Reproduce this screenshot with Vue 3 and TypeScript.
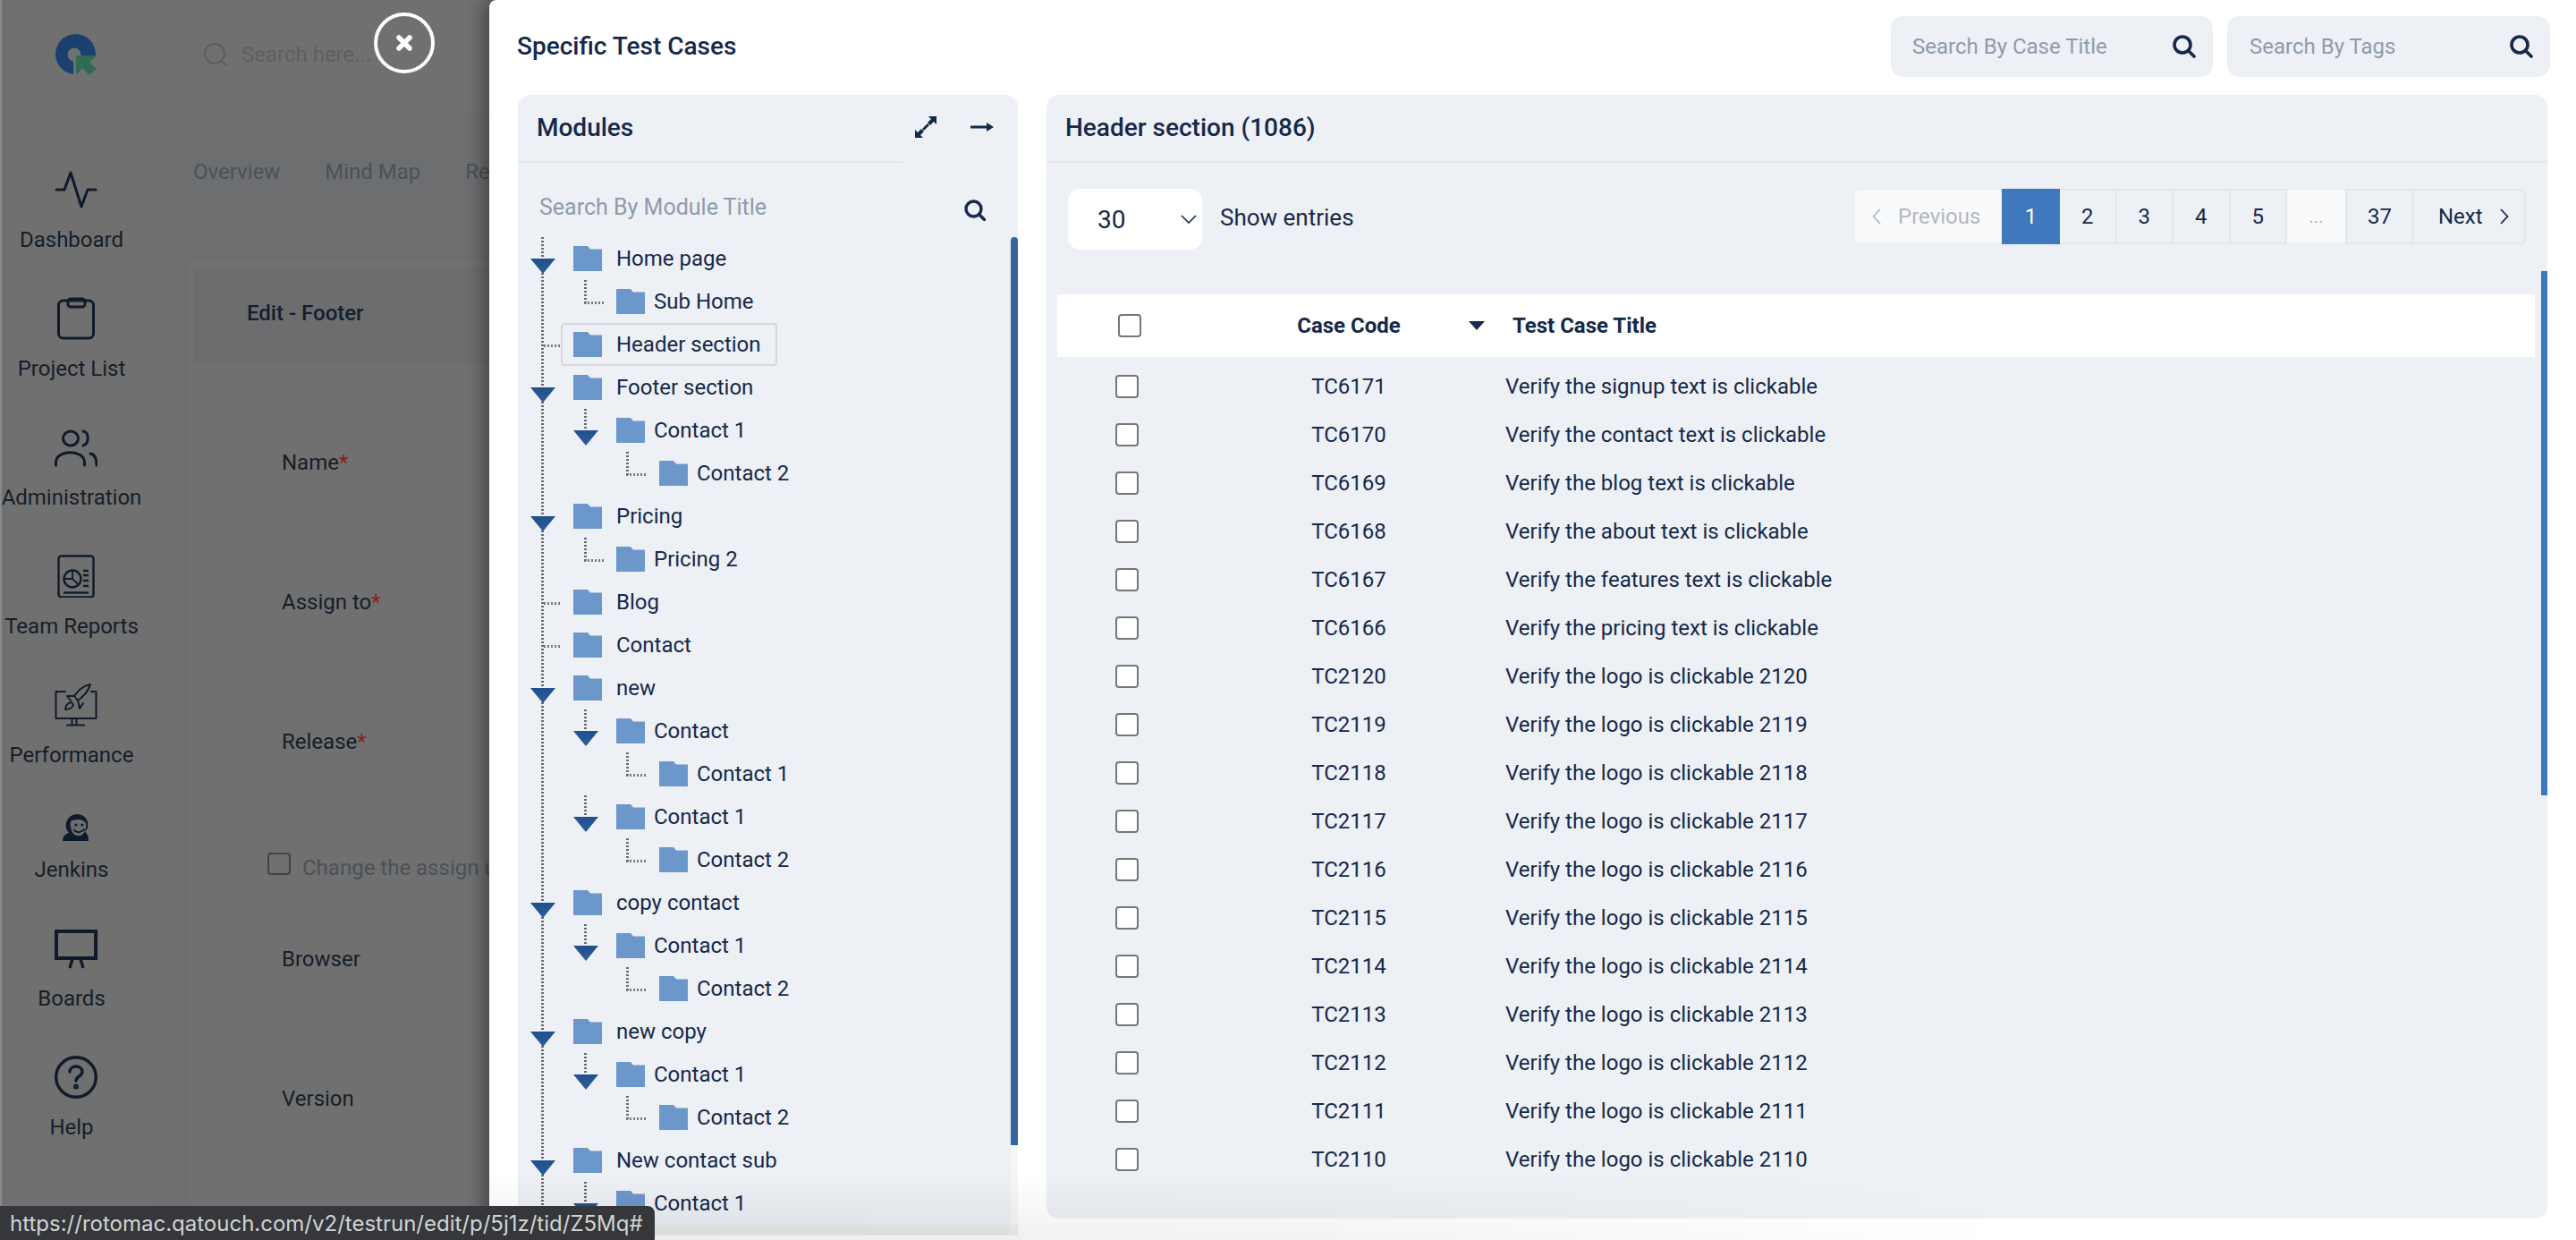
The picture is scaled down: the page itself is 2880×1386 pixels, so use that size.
<template>
  <div class="screen">
    <!-- dimmed app behind the drawer -->
    <div class="app">
      <aside class="sidebar">
        <div class="logo-wrap">
          <svg class="logo" viewBox="60 36 50 50" width="50" height="50">
            <circle cx="84.5" cy="60.5" r="22.5" fill="#1b3f6e" />
            <rect x="82" y="62" width="30" height="26" fill="#707070" />
            <circle cx="83" cy="61" r="7.5" fill="#707070" />
            <polygon points="85,62 108,62 100,70 108,77 100,84 92,76 85,84" fill="#2e6b52" />
          </svg>
        </div>
        <nav class="nav">
          <div class="nav-item">
            <div class="nav-icon">
              <svg viewBox="61 188 48 48" width="48" height="48" fill="none" stroke="#0f1b2b" stroke-width="3" stroke-linecap="round" stroke-linejoin="round">
                <polyline points="63,212 72,212 79,193 91,231 98,212 107,212" />
              </svg>
            </div>
            <span class="nav-label">Dashboard</span>
          </div>
          <div class="nav-item">
            <div class="nav-icon">
              <svg viewBox="61 332 48 48" width="48" height="48" fill="none" stroke="#0f1b2b" stroke-width="3">
                <rect x="65.5" y="336" width="39" height="42" rx="5" />
                <rect x="76" y="334" width="19" height="9" rx="3" />
              </svg>
            </div>
            <span class="nav-label">Project List</span>
          </div>
          <div class="nav-item">
            <div class="nav-icon">
              <svg viewBox="61 476 48 48" width="48" height="48" fill="none" stroke="#0f1b2b" stroke-width="3" stroke-linecap="round">
                <ellipse cx="79" cy="490" rx="8.5" ry="8" />
                <path d="M93 482c7 1 7 14 0 16" />
                <path d="M62.5 520v-3c0-15 32-15 32 0v3" />
                <path d="M101 507c5 1 7 5 7 13" />
              </svg>
            </div>
            <span class="nav-label">Administration</span>
          </div>
          <div class="nav-item">
            <div class="nav-icon">
              <svg viewBox="61 619 48 48" width="48" height="48" fill="none" stroke="#0f1b2b" stroke-width="2.4">
                <rect x="65.5" y="620.5" width="39" height="46" rx="3" />
                <circle cx="81" cy="646" r="9.5" />
                <path d="M81 636.5V646l7 6.5M81 646l-9.5 0" stroke-width="1.8" />
                <path d="M93 637h6M93 642h6M93 648h6M93 654h6" />
                <path d="M71 661.5h28" />
              </svg>
            </div>
            <span class="nav-label">Team Reports</span>
          </div>
          <div class="nav-item">
            <div class="nav-icon">
              <svg viewBox="61 764 48 48" width="48" height="48" fill="none" stroke="#0f1b2b" stroke-width="2" stroke-linecap="round" stroke-linejoin="round">
                <path d="M73 773H62.5v30h45v-30H102" />
                <path d="M80.5 803v7M85.5 803v7M75 810.5h19" />
                <path d="M101 765c-7 1-13 6-18 13l4 5c7-5 12-11 14-18z" />
                <path d="M83 778l-8 0 4 5M87 783l2 9 4-6" />
                <path d="M73 793c0-5 4-8 7-8l2 3c-1 3-5 5-9 5z" />
              </svg>
            </div>
            <span class="nav-label">Performance</span>
          </div>
          <div class="nav-item nav-item--short">
            <div class="nav-icon nav-icon--short">
              <svg viewBox="69 907 32 32" width="32" height="32">
                <path d="M70 939c0-5 3-8 7-9-3-3-4-7-3-11 2-8 10-12 17-9 6 2 8 8 7 14-1 2-2 4-3 5 3 2 4 5 4 10z" fill="#0f1b2b" />
                <path d="M79 917c5-3 14-3 17 2 1 5-1 12-6 14-5 1-9-2-10-6-1-4-2-7-1-10z" fill="#6e6e6e" />
                <circle cx="85" cy="921" r="1.6" fill="#0f1b2b" />
                <circle cx="92" cy="921" r="1.6" fill="#0f1b2b" />
                <path d="M83 927c3 3 8 3 11-1" fill="none" stroke="#0f1b2b" stroke-width="2" stroke-linecap="round" />
              </svg>
            </div>
            <span class="nav-label">Jenkins</span>
          </div>
          <div class="nav-item">
            <div class="nav-icon">
              <svg viewBox="61 1035 48 48" width="48" height="48" fill="none" stroke="#0f1b2b" stroke-width="4">
                <rect x="63" y="1040" width="44" height="30" />
                <path d="M81 1071l-3 10M90 1071l3 10" stroke-width="3.4" />
              </svg>
            </div>
            <span class="nav-label">Boards</span>
          </div>
          <div class="nav-item">
            <div class="nav-icon">
              <svg viewBox="61 1179 48 48" width="48" height="48" fill="none" stroke="#0f1b2b" stroke-width="3.4" stroke-linecap="round">
                <circle cx="85" cy="1203" r="22.3" />
                <path d="M78 1197c0-8 14-8 14 0 0 5-7 5-7 10" />
                <circle cx="85" cy="1213.5" r="1.2" />
              </svg>
            </div>
            <span class="nav-label">Help</span>
          </div>
        </nav>
      </aside>

      <div class="main">
        <header class="topbar">
          <svg viewBox="0 0 26 27" width="26" height="27" fill="none" stroke="#5c5f62" stroke-width="2">
            <circle cx="12" cy="12" r="11" />
            <path d="M20 20l6 6" />
          </svg>
          <span class="topbar-search">Search here...</span>
        </header>
        <div class="content">
          <div class="tabs">
            <span>Overview</span>
            <span>Mind Map</span>
            <span>Reports</span>
          </div>
          <section class="card">
            <div class="card-head">Edit - Footer</div>
            <div class="form">
              <div class="form-row">Name<b>*</b></div>
              <div class="form-row">Assign to<b>*</b></div>
              <div class="form-row">Release<b>*</b></div>
              <div class="form-check">
                <i class="bg-check"></i>
                <span>Change the assign user</span>
              </div>
              <div class="form-row">Browser</div>
              <div class="form-row">Version</div>
            </div>
          </section>
        </div>
      </div>
    </div>

    <!-- drawer -->
    <div class="drawer">
      <header class="drawer-head">
        <h2 class="drawer-title">Specific Test Cases</h2>
        <div class="drawer-search">
          <div class="search-box">
            <span>Search By Case Title</span>
            <svg viewBox="0 0 26 26" width="26" height="26" fill="none" stroke="#15294a" stroke-width="3.6"><circle cx="11" cy="11" r="9" /><path d="M17.5 17.5L24 24" stroke-linecap="round" /></svg>
          </div>
          <div class="search-box search-box--tags">
            <span>Search By Tags</span>
            <svg viewBox="0 0 26 26" width="26" height="26" fill="none" stroke="#15294a" stroke-width="3.6"><circle cx="11" cy="11" r="9" /><path d="M17.5 17.5L24 24" stroke-linecap="round" /></svg>
          </div>
        </div>
      </header>

      <div class="drawer-body">
        <section class="modules">
          <div class="modules-head">
            <h3 class="modules-title">Modules</h3>
            <div class="modules-actions">
              <svg viewBox="0 0 24 24" width="24" height="24" fill="#15294a">
                <path d="M15 0h9v9l-3-3-4 4-3-3 4-4z" />
                <path d="M0 24v-9l3 3 4-4 3 3-4 4 3 3z" />
                <path d="M8 14l6-6 2 2-6 6z" />
              </svg>
              <svg viewBox="0 0 26 10" width="26" height="10" fill="#15294a">
                <path d="M0 3.5h18V0l8 5-8 5V6.5H0z" />
              </svg>
            </div>
          </div>
          <div class="module-search">
            <span>Search By Module Title</span>
            <svg viewBox="0 0 24 24" width="24" height="24" fill="none" stroke="#15294a" stroke-width="3.4"><circle cx="10.5" cy="10.5" r="8.5" /><path d="M17 17l6 6" stroke-linecap="round" /></svg>
          </div>
          <div class="tree">
            <i class="tree-trunk"></i>
            <div
              v-for="(node, idx) in tree"
              :key="idx"
              class="tree-row"
              :class="[`tree-row--l${node.level}`, node.open ? 'tree-row--open' : 'tree-row--leaf']"
            >
              <i v-if="node.open" class="tree-arrow"></i>
              <div class="tree-node" :class="{ 'tree-node--active': node.active }">
                <svg class="folder" viewBox="0 0 32 28" width="32" height="28"><path d="M0 0h16l3 3.5h13V28H0z" fill="#6c97cb" /></svg>
                <span>{{ node.name }}</span>
              </div>
            </div>
            <i class="tree-scroll"></i>
          </div>
          <div class="modules-foot"></div>
        </section>

        <section class="cases">
          <div class="cases-head">Header section (1086)</div>
          <div class="toolbar">
            <div class="page-size">
              <span>30</span>
              <svg viewBox="0 0 18 10" width="18" height="10" fill="none" stroke="#15294a" stroke-width="1.6"><path d="M1 1l8 8 8-8" /></svg>
            </div>
            <span class="show-entries">Show entries</span>
            <div class="pager">
              <div class="page page--prev">
                <svg viewBox="0 0 10 18" width="10" height="18" fill="none" stroke="#b4b8bd" stroke-width="1.8"><path d="M9 1L1.5 9 9 17" /></svg>
                <span>Previous</span>
              </div>
              <div class="page page--active">1</div>
              <div v-for="n in [2, 3, 4, 5]" :key="n" class="page">{{ n }}</div>
              <div class="page page--dots">...</div>
              <div class="page page--last">37</div>
              <div class="page page--next">
                <span>Next</span>
                <svg viewBox="0 0 10 18" width="10" height="18" fill="none" stroke="#15294a" stroke-width="1.8"><path d="M1 1l7.5 8L1 17" /></svg>
              </div>
            </div>
          </div>
          <div class="table-head">
            <div class="col-check"><input type="checkbox" class="check" /></div>
            <div class="col-code">Case Code</div>
            <div class="col-title">
              <i class="sort"></i>
              <span>Test Case Title</span>
            </div>
          </div>
          <div class="table-body">
            <div v-for="row in rows" :key="row.code" class="table-row">
              <div class="col-check"><input type="checkbox" class="check" /></div>
              <div class="col-code">{{ row.code }}</div>
              <div class="col-title">{{ row.title }}</div>
            </div>
          </div>
          <i class="cases-scroll"></i>
        </section>
      </div>
    </div>

    <button class="close-btn" type="button" aria-label="Close">
      <svg viewBox="0 0 18 18" width="18" height="18" stroke="#fff" stroke-width="5.5" stroke-linecap="round"><path d="M3 3l12 12M15 3L3 15" /></svg>
    </button>

    <div class="bottom-fade"></div>
    <div class="status">https://rotomac.qatouch.com/v2/testrun/edit/p/5j1z/tid/Z5Mq#</div>
  </div>
</template>

<script setup lang="ts">
interface TreeNode {
  name: string
  level: number
  open?: boolean
  active?: boolean
}

const tree: TreeNode[] = [
  { name: 'Home page', level: 0, open: true },
  { name: 'Sub Home', level: 1 },
  { name: 'Header section', level: 0, active: true },
  { name: 'Footer section', level: 0, open: true },
  { name: 'Contact 1', level: 1, open: true },
  { name: 'Contact 2', level: 2 },
  { name: 'Pricing', level: 0, open: true },
  { name: 'Pricing 2', level: 1 },
  { name: 'Blog', level: 0 },
  { name: 'Contact', level: 0 },
  { name: 'new', level: 0, open: true },
  { name: 'Contact', level: 1, open: true },
  { name: 'Contact 1', level: 2 },
  { name: 'Contact 1', level: 1, open: true },
  { name: 'Contact 2', level: 2 },
  { name: 'copy contact', level: 0, open: true },
  { name: 'Contact 1', level: 1, open: true },
  { name: 'Contact 2', level: 2 },
  { name: 'new copy', level: 0, open: true },
  { name: 'Contact 1', level: 1, open: true },
  { name: 'Contact 2', level: 2 },
  { name: 'New contact sub', level: 0, open: true },
  { name: 'Contact 1', level: 1, open: true }
]

const rows = [
  { code: 'TC6171', title: 'Verify the signup text is clickable' },
  { code: 'TC6170', title: 'Verify the contact text is clickable' },
  { code: 'TC6169', title: 'Verify the blog text is clickable' },
  { code: 'TC6168', title: 'Verify the about text is clickable' },
  { code: 'TC6167', title: 'Verify the features text is clickable' },
  { code: 'TC6166', title: 'Verify the pricing text is clickable' },
  ...[2120, 2119, 2118, 2117, 2116, 2115, 2114, 2113, 2112, 2111, 2110].map((n) => ({
    code: `TC${n}`,
    title: `Verify the logo is clickable ${n}`
  }))
]
</script>

<style>
html,
body {
  margin: 0;
  overflow: hidden;
  background: #fff;
}
</style>

<style scoped>
.screen {
  position: relative;
  width: 2880px;
  height: 1386px;
  overflow: hidden;
  font-family: Roboto, 'Liberation Sans', sans-serif;
  color: #15294a;
}

.app {
  display: flex;
  height: 100%;
  background: #707070;
  border-left: 2px solid #8a8a8a;
  box-sizing: border-box;
  color: #141e2b;
}

.sidebar {
  width: 170px;
  flex: none;
  margin-left: -2px;
}

.logo-wrap {
  height: 188px;
  padding: 36px 0 0 60px;
  box-sizing: border-box;
}

.logo {
  display: block;
}

.nav-item {
  height: 144px;
}

.nav-item--short {
  height: 128px;
}

.nav-icon {
  width: 170px;
  height: 48px;
  margin-bottom: 17px;
  display: flex;
  justify-content: center;
  align-items: center;
}

.nav-icon--short {
  height: 32px;
}

.nav-label {
  display: block;
  width: 160px;
  text-align: center;
  font-size: 24px;
  line-height: 30px;
  white-space: nowrap;
}

.main {
  flex: 1;
  min-width: 0;
}

.topbar {
  height: 122px;
  padding: 0 0 4px 58px;
  display: flex;
  align-items: center;
  gap: 16px;
}

.topbar-search {
  font-size: 24px;
  color: #5d5f62;
}

.content {
  height: 1264px;
  background: #6d6e70;
}

.tabs {
  height: 164px;
  box-sizing: border-box;
  padding: 51px 0 0 46px;
  display: flex;
  gap: 50px;
  font-size: 24px;
  line-height: 30px;
  color: #4b5158;
  white-space: nowrap;
}

.card {
  margin-left: 39px;
  height: 1100px;
  padding: 8px 0 0 8px;
  box-sizing: border-box;
  background: #707070;
}

.card-head {
  height: 108px;
  padding: 0 0 4px 59px;
  box-sizing: border-box;
  display: flex;
  align-items: center;
  background: #6c6d6f;
  font-size: 24px;
  font-weight: 500;
}

.form {
  padding: 33px 0 0 98px;
  font-size: 24px;
}

.form-row {
  height: 156px;
  display: flex;
  align-items: center;
}

.form-row b {
  font-weight: 400;
  color: #8b1c1c;
}

.form-check {
  height: 87px;
  margin-left: -16px;
  display: flex;
  align-items: flex-start;
  gap: 13px;
  padding-top: 46px;
  box-sizing: border-box;
  color: #4b5158;
  white-space: nowrap;
}

.form-check span {
  margin-top: 3px;
}

.bg-check {
  width: 26px;
  height: 25px;
  border: 2px solid #3f4347;
  border-radius: 4px;
  box-sizing: border-box;
}

.drawer {
  position: absolute;
  top: 0;
  right: 0;
  bottom: 0;
  left: 547px;
  background: #fff;
  border-top-left-radius: 8px;
  box-shadow: -6px 0 20px rgba(0, 0, 0, 0.4);
  display: flex;
  flex-direction: column;
}

.drawer-head {
  height: 106px;
  flex: none;
  box-sizing: border-box;
  padding: 18px 29px 20px 31px;
  display: flex;
  align-items: center;
  justify-content: space-between;
}

.drawer-title {
  margin: 0 0 2px;
  font-size: 28px;
  font-weight: 500;
}

.drawer-search {
  display: flex;
  gap: 16px;
}

.search-box {
  width: 360px;
  height: 68px;
  box-sizing: border-box;
  padding: 0 19px 0 24px;
  display: flex;
  align-items: center;
  justify-content: space-between;
  background: #edf0f4;
  border-radius: 14px;
  font-size: 24px;
  color: #8e9bad;
}

.search-box--tags {
  width: 361px;
  padding-left: 25px;
}

.drawer-body {
  display: flex;
  align-items: flex-start;
  padding-left: 32px;
  gap: 32px;
}

.modules {
  width: 559px;
  height: 1275px;
  flex: none;
  background: #edf0f4;
  border-radius: 14px 14px 0 0;
}

.modules-head {
  display: flex;
}

.modules-title {
  width: 431px;
  height: 76px;
  margin: 0;
  box-sizing: border-box;
  padding: 0 0 2px 21px;
  display: flex;
  align-items: center;
  font-size: 28px;
  font-weight: 500;
  border-bottom: 2px solid #e4e6ea;
}

.modules-actions {
  padding: 0 0 4px 13px;
  display: flex;
  align-items: center;
  gap: 38px;
}

.module-search {
  height: 83px;
  box-sizing: border-box;
  padding: 0 36px 18px 24px;
  display: flex;
  align-items: flex-end;
  justify-content: space-between;
  font-size: 25px;
  color: #8e9bad;
}

.module-search span {
  line-height: 30px;
}

.tree {
  position: relative;
  height: 1104px;
  overflow: hidden;
}

.tree-trunk {
  position: absolute;
  left: 26px;
  top: 0;
  bottom: 0;
  width: 3px;
  background: repeating-linear-gradient(#666b72 0 2px, transparent 2px 4px);
}

.tree-row {
  position: relative;
  height: 48px;
  display: flex;
}

.tree-row--l0 {
  padding-left: 48px;
}

.tree-row--l1 {
  padding-left: 96px;
}

.tree-row--l2 {
  padding-left: 144px;
}

.tree-node {
  height: 48px;
  box-sizing: border-box;
  padding: 0 16px 0 12px;
  border: 2px solid transparent;
  border-radius: 4px;
  display: flex;
  align-items: center;
  gap: 16px;
  font-size: 24px;
  white-space: nowrap;
}

.tree-row--l1 .tree-node,
.tree-row--l2 .tree-node {
  gap: 10px;
}

.tree-node--active {
  border-color: #d5d9de;
}

.folder {
  flex: none;
}

.tree-arrow {
  position: absolute;
  top: 24px;
  width: 28px;
  height: 17px;
  background: linear-gradient(#20508c, #2c5e9c);
  clip-path: polygon(0 0, 100% 0, 50% 100%);
}

.tree-row--l0 .tree-arrow {
  left: 14px;
}

.tree-row--l1 .tree-arrow {
  left: 62px;
}

.tree-row--l1.tree-row--open::before {
  content: '';
  position: absolute;
  left: 74px;
  top: 0;
  width: 3px;
  height: 24px;
  background: repeating-linear-gradient(#666b72 0 2px, transparent 2px 4px);
}

.tree-row--l0.tree-row--leaf::before {
  content: '';
  position: absolute;
  left: 29px;
  top: 24px;
  width: 19px;
  height: 3px;
  background: repeating-linear-gradient(90deg, #777c83 0 2px, transparent 2px 4px);
}

.tree-row--l1.tree-row--leaf::before,
.tree-row--l2.tree-row--leaf::before {
  content: '';
  position: absolute;
  top: 0;
  width: 22px;
  height: 27px;
  background:
    repeating-linear-gradient(#666b72 0 2px, transparent 2px 4px) left top / 3px 100% no-repeat,
    repeating-linear-gradient(90deg, #777c83 0 2px, transparent 2px 4px) left bottom / 100% 3px no-repeat;
}

.tree-row--l1.tree-row--leaf::before {
  left: 74px;
}

.tree-row--l2.tree-row--leaf::before {
  left: 121px;
}

.tree-scroll {
  position: absolute;
  right: 0;
  top: 0;
  width: 8px;
  height: 100%;
  background: linear-gradient(#34659d 0 1015px, #f4f6f7 1015px);
  border-radius: 4px 4px 0 0;
}

.modules-foot {
  width: 551px;
  height: 12px;
  background: #e9eaea;
  border-radius: 0 6px 6px 0;
}

.cases {
  position: relative;
  width: 1678px;
  height: 1256px;
  flex: none;
  background: #edf0f4;
  border-radius: 14px;
}

.cases-head {
  height: 76px;
  box-sizing: border-box;
  padding: 0 0 2px 21px;
  display: flex;
  align-items: center;
  font-size: 28px;
  font-weight: 500;
  border-bottom: 2px solid #e4e6ea;
}

.toolbar {
  height: 147px;
  box-sizing: border-box;
  padding: 29px 24px 0;
  display: flex;
  align-items: flex-start;
}

.page-size {
  width: 150px;
  height: 68px;
  box-sizing: border-box;
  padding: 0 6px 0 33px;
  background: #fff;
  border-radius: 14px;
  display: flex;
  align-items: center;
  justify-content: space-between;
  font-size: 28px;
}

.show-entries {
  margin-left: 20px;
  font-size: 26px;
  line-height: 64px;
}

.pager {
  margin-left: auto;
  height: 62px;
  display: flex;
  align-items: center;
  font-size: 24px;
}

.page {
  width: 63.5px;
  height: 62px;
  box-sizing: border-box;
  display: flex;
  align-items: center;
  justify-content: center;
  border: solid #e2e6ec;
  border-width: 2px 2px 2px 0;
}

.page--prev {
  width: 164px;
  height: 58px;
  padding-left: 19px;
  justify-content: flex-start;
  gap: 19px;
  border: 0;
  background: #f9fafb;
  color: #b4b8bd;
  border-radius: 4px 0 0 4px;
}

.page--active {
  width: 65px;
  background: #3f78bd;
  color: #fff;
  border: 0;
}

.page--dots {
  width: 65px;
  height: 58px;
  border: 0;
  background: #f9fafb;
  color: #b4b8bd;
  font-size: 20px;
}

.page--last {
  width: 77px;
  border-left-width: 2px;
}

.page--next {
  width: 125px;
  padding-left: 27px;
  justify-content: flex-start;
  gap: 19px;
  border-radius: 0 6px 6px 0;
}

.table-head,
.table-row {
  display: flex;
  align-items: center;
}

.table-head {
  margin-left: 12px;
  width: 1652px;
  height: 70px;
  background: #fff;
  font-size: 24px;
  font-weight: 700;
}

.table-body {
  margin-left: 12px;
  padding-top: 6px;
  font-size: 24px;
}

.table-row {
  height: 54px;
}

.col-check {
  width: 218px;
  box-sizing: border-box;
  padding-left: 65px;
  display: flex;
}

.table-head .col-check {
  padding-left: 68px;
}

.col-code {
  width: 216px;
  text-align: center;
}

.col-title {
  padding-left: 67px;
  white-space: nowrap;
}

.table-head .col-title {
  padding-left: 26px;
  display: flex;
  align-items: center;
  gap: 31px;
}

.sort {
  width: 18px;
  height: 10px;
  background: #15294a;
  clip-path: polygon(0 0, 100% 0, 50% 100%);
}

.check {
  appearance: none;
  width: 26px;
  height: 26px;
  margin: 0;
  background: #fff;
  border: 2px solid #767676;
  border-radius: 4px;
}

.cases-scroll {
  position: absolute;
  right: 0;
  top: 197px;
  width: 7px;
  height: 586px;
  background: #3f78bd;
}

.close-btn {
  position: absolute;
  left: 418px;
  top: 14px;
  width: 68px;
  height: 68px;
  padding: 0;
  display: flex;
  align-items: center;
  justify-content: center;
  background: transparent;
  border: 4px solid #fff;
  border-radius: 50%;
}

.bottom-fade {
  position: absolute;
  left: 547px;
  bottom: 0;
  width: 1700px;
  height: 76px;
  pointer-events: none;
  background: linear-gradient(to right, rgba(0, 0, 0, 0.07), rgba(0, 0, 0, 0.05) 50%, transparent);
  -webkit-mask-image: linear-gradient(transparent, #000);
  mask-image: linear-gradient(transparent, #000);
}

.status {
  position: absolute;
  left: 0;
  bottom: 0;
  width: 732px;
  height: 38px;
  box-sizing: border-box;
  padding-left: 11px;
  display: flex;
  align-items: center;
  background: #35373b;
  border-top-right-radius: 8px;
  font-family: Inter, 'Liberation Sans', sans-serif;
  font-size: 24px;
  color: #d2d3d4;
  white-space: nowrap;
}
</style>
